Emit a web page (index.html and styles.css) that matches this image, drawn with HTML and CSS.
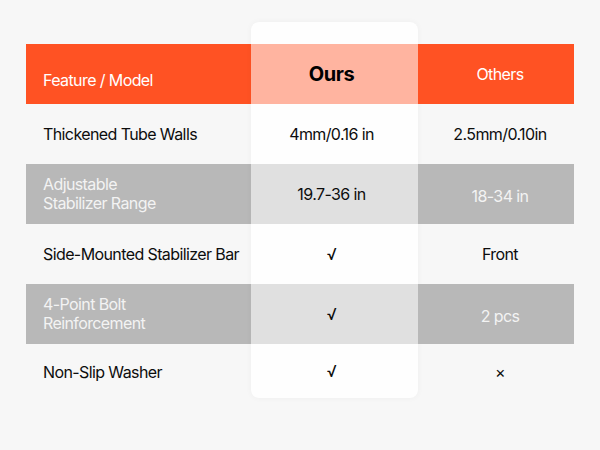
FILE: index.html
```html
<!DOCTYPE html>
<html lang="en">
<head>
<meta charset="utf-8">
<link rel="stylesheet" href="styles.css">
</head>
<body>
<div class="table">
  <div class="col col-feature">
    <div class="cell head"><span class="head-feature">Feature / Model</span></div>
    <div class="cell">Thickened Tube Walls</div>
    <div class="cell gray">Adjustable<br>Stabilizer Range</div>
    <div class="cell">Side-Mounted Stabilizer Bar</div>
    <div class="cell gray">4-Point Bolt<br>Reinforcement</div>
    <div class="cell last">Non-Slip Washer</div>
  </div>
  <div class="col col-ours">
    <div class="cell head">Ours</div>
    <div class="cell">4mm/0.16 in</div>
    <div class="cell gray">19.7-36 in</div>
    <div class="cell">√</div>
    <div class="cell gray">√</div>
    <div class="cell last">√</div>
  </div>
  <div class="col col-others">
    <div class="cell head">Others</div>
    <div class="cell">2.5mm/0.10in</div>
    <div class="cell gray">18-34 in</div>
    <div class="cell">Front</div>
    <div class="cell gray">2 pcs</div>
    <div class="cell last">×</div>
  </div>
</div>
</body>
</html>
```
FILE: styles.css
```css
html, body {
  margin: 0;
  padding: 0;
  background: #f7f7f7;
}
body {
  width: 600px;
  height: 450px;
  overflow: hidden;
  font-family: "Inter", "Liberation Sans", sans-serif;
  color: #0d0d0d;
}
.table {
  display: flex;
  padding: 22px 26px 0 26px;
}
.col {
  display: flex;
  flex-direction: column;
}
.cell {
  height: 60px;
  display: flex;
  align-items: center;
  font-size: 16px;
  line-height: 19px;
  letter-spacing: -0.6px;
}
.cell.last {
  height: 56px;
}
.head {
  background: #ff5223;
  color: #fff;
}
.gray {
  background: #b8b8b8;
  color: #f3f3f3;
}
.col-feature {
  width: 225px;
  padding-top: 22px;
}
.col-feature .cell {
  padding-left: 17px;
}
.head-feature {
  padding-top: 13px;
}
.col-ours {
  width: 167px;
  background: #fefefe;
  border-radius: 8px;
  padding-top: 22px;
  box-shadow: 0 0 6px rgba(0, 0, 0, 0.04);
  align-self: flex-start;
}
.col-ours .cell {
  justify-content: center;
  padding-right: 6px;
}
.col-ours .head {
  background: #ffb4a0;
  color: #000;
  font-weight: 700;
  font-size: 20px;
  letter-spacing: -0.4px;
}
.col-ours .gray {
  background: #e0e0e0;
  color: #0d0d0d;
}
.col-ours .last {
  height: 54px;
}
.col-others {
  width: 156px;
  padding-top: 22px;
}
.col-others .cell {
  justify-content: center;
  padding-left: 8px;
}
.col-others .gray {
  padding-top: 4px;
  height: 56px;
}
```
